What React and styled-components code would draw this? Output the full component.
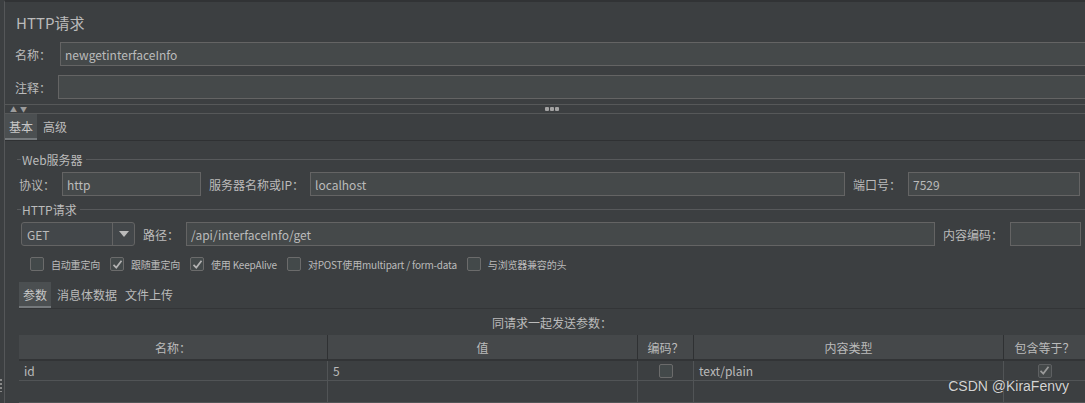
import React from 'react';
import styled, { createGlobalStyle } from 'styled-components';

const GlobalStyle = createGlobalStyle`
  html, body {
    margin: 0;
    padding: 0;
    background: #3c3f41;
    overflow: hidden;
  }
  * {
    box-sizing: border-box;
  }
`;

const App = () => {
  return (
    <>
      <GlobalStyle />
      <Page>
        <Gutter>
          <Grip />
        </Gutter>
        <Frame>
          <Title>HTTP请求</Title>
          <TopRow>
            <TopLabel width={45}>名称：</TopLabel>
            <WideInput>newgetinterfaceInfo</WideInput>
          </TopRow>
          <TopRow gap={9}>
            <TopLabel width={43}>注释：</TopLabel>
            <WideInput />
          </TopRow>
          <Splitter>
            <Arrows>
              <span>▲</span>
              <span>▼</span>
            </Arrows>
            <Dots>
              <i /><i /><i />
            </Dots>
          </Splitter>
          <TabBar>
            <Tab active>基本</Tab>
            <Tab>高级</Tab>
          </TabBar>

          <Content>
            <GroupHeader>
              <span>Web服务器</span>
            </GroupHeader>
            <FormRow>
              <Label width={43}>协议：</Label>
              <Input width={139}>http</Input>
              <Label width={101} space={8}>服务器名称或IP：</Label>
              <Input width={535}>localhost</Input>
              <Label width={55} space={8}>端口号：</Label>
              <Input width={172}>7529</Input>
            </FormRow>

            <GroupHeader>
              <span>HTTP请求</span>
            </GroupHeader>
            <FormRow>
              <Combo>
                <ComboValue>GET</ComboValue>
                <ComboButton>
                  <svg width="10" height="6" viewBox="0 0 10 6">
                    <path d="M0 0 L10 0 L5 6 Z" fill="#bbbbbb" />
                  </svg>
                </ComboButton>
              </Combo>
              <Label width={43} space={8}>路径：</Label>
              <Input width={749}>/api/interfaceInfo/get</Input>
              <Label width={67} space={8}>内容编码：</Label>
              <Input width={71} />
            </FormRow>

            <CheckRow>
              <CheckItem>
                <Box />
                <SmallText>自动重定向</SmallText>
              </CheckItem>
              <CheckItem>
                <Box checked />
                <SmallText>跟随重定向</SmallText>
              </CheckItem>
              <CheckItem>
                <Box checked />
                <SmallText>使用 KeepAlive</SmallText>
              </CheckItem>
              <CheckItem>
                <Box />
                <SmallText>对POST使用multipart / form-data</SmallText>
              </CheckItem>
              <CheckItem>
                <Box />
                <SmallText>与浏览器兼容的头</SmallText>
              </CheckItem>
            </CheckRow>

            <SubTabBar>
              <Tab active>参数</Tab>
              <Tab>消息体数据</Tab>
              <Tab>文件上传</Tab>
            </SubTabBar>

            <Caption>同请求一起发送参数：</Caption>
            <Table>
              <Head>名称：</Head>
              <Head>值</Head>
              <Head>编码？</Head>
              <Head>内容类型</Head>
              <Head last>包含等于？</Head>

              <Cell>id</Cell>
              <Cell>5</Cell>
              <Cell center><Box /></Cell>
              <Cell>text/plain</Cell>
              <Cell center last><Box checked disabled /></Cell>

              <Cell />
              <Cell />
              <Cell />
              <Cell />
              <Cell last />
            </Table>
          </Content>
        </Frame>
        <Watermark>CSDN @KiraFenvy</Watermark>
      </Page>
    </>
  );
};

const Box = ({ checked, disabled }) => (
  <BoxFrame disabled={disabled}>
    {checked && (
      <svg width="11" height="11" viewBox="0 0 11 11">
        <path
          d="M1.5 5.8 L4.3 8.6 L9.5 1.8"
          fill="none"
          stroke={disabled ? '#9a9a9a' : '#b4b4b4'}
          strokeWidth="1.7"
        />
      </svg>
    )}
  </BoxFrame>
);

export default App;

const Page = styled.div`
  position: relative;
  display: flex;
  width: 1085px;
  height: 403px;
  overflow: hidden;
  background: #3c3f41;
  color: #bbbbbb;
  font-family: "Noto Sans CJK SC", "Noto Sans", sans-serif;
  font-size: 12px;
`;

const Gutter = styled.div`
  width: 4px;
  flex-shrink: 0;
  display: flex;
  flex-direction: column;
  justify-content: flex-end;
  padding-bottom: 11px;
`;

const Grip = styled.div`
  width: 2px;
  height: 13px;
  background: repeating-linear-gradient(
    to bottom,
    #8a8a8a 0 2px,
    transparent 2px 4px
  );
`;

const Frame = styled.div`
  flex: 1;
  min-width: 0;
  display: flex;
  flex-direction: column;
  border-left: 1px solid #555759;
  border-top: 2px solid #313335;
`;

const Title = styled.div`
  height: 41px;
  display: flex;
  align-items: center;
  padding: 0 0 0 11px;
  font-size: 15px;
  color: #bbbbbb;
`;

const TopRow = styled.div`
  display: flex;
  align-items: center;
  height: 24px;
  margin-top: ${(p) => p.gap || 0}px;
  padding-left: 10px;
`;

const TopLabel = styled.div`
  width: ${(p) => p.width}px;
  flex-shrink: 0;
  white-space: nowrap;
`;

const WideInput = styled.div`
  flex: 1;
  height: 24px;
  margin-right: -4px;
  display: flex;
  align-items: center;
  padding-left: 4px;
  background: #45494a;
  border: 1px solid #646464;
  white-space: nowrap;
`;

const Splitter = styled.div`
  position: relative;
  height: 10px;
  margin-top: 5px;
  border-top: 1px solid #565859;
  border-bottom: 1px solid #565859;
  display: flex;
  align-items: center;
`;

const Arrows = styled.div`
  display: flex;
  gap: 3px;
  padding-left: 5px;
  font-size: 7px;
  line-height: 8px;
  color: #9c9c9c;
`;

const Dots = styled.div`
  display: flex;
  gap: 1px;
  margin-left: 518px;

  i {
    display: block;
    width: 4px;
    height: 4px;
    border-radius: 1px;
    background: #a3a3a3;
  }
`;

const TabBar = styled.div`
  display: flex;
  height: 27px;
  border-bottom: 1px solid #2f3133;
`;

const Tab = styled.div`
  display: flex;
  align-items: center;
  height: 26px;
  padding: 0 4px 0 4px;
  margin-right: ${(p) => (p.active ? 2 : 0)}px;
  background: ${(p) => (p.active ? '#4b4f51' : 'transparent')};
  border-bottom: 2px solid ${(p) => (p.active ? '#75797c' : 'transparent')};
  color: ${(p) => (p.active ? '#c8c8c8' : '#bbbbbb')};
  white-space: nowrap;
`;

const Content = styled.div`
  display: flex;
  flex-direction: column;
  padding: 5px 0 0 12px;
`;

const GroupHeader = styled.div`
  height: 26px;
  display: flex;
  align-items: center;

  &::before,
  &::after {
    content: '';
    height: 1px;
    background: #57595b;
  }
  &::before {
    width: 4px;
    margin-right: 1px;
  }
  &::after {
    flex: 1;
    margin-left: 3px;
  }
`;

const FormRow = styled.div`
  display: flex;
  align-items: center;
  height: 24px;
  padding-left: 2px;
`;

const Label = styled.div`
  width: ${(p) => p.width}px;
  margin-left: ${(p) => p.space || 0}px;
  flex-shrink: 0;
  white-space: nowrap;
`;

const Input = styled.div`
  width: ${(p) => p.width}px;
  height: 24px;
  flex-shrink: 0;
  display: flex;
  align-items: center;
  padding-left: 4px;
  background: #45494a;
  border: 1px solid #646464;
  white-space: nowrap;
`;

const Combo = styled.div`
  display: flex;
  width: 114px;
  height: 24px;
  margin-left: 2px;
  border: 1px solid #646464;
  border-radius: 3px;
  background: #43474a;
`;

const ComboValue = styled.div`
  flex: 1;
  display: flex;
  align-items: center;
  padding-left: 5px;
  border-right: 1px solid #646464;
`;

const ComboButton = styled.div`
  width: 21px;
  display: flex;
  align-items: center;
  justify-content: center;
`;

const CheckRow = styled.div`
  height: 36px;
  display: flex;
  align-items: center;
  padding-left: 13px;
`;

const CheckItem = styled.div`
  display: flex;
  align-items: center;
  margin-right: 10px;
`;

const BoxFrame = styled.div`
  width: 14px;
  height: 14px;
  flex-shrink: 0;
  display: flex;
  align-items: center;
  justify-content: center;
  border: 1px solid ${(p) => (p.disabled ? '#5e6062' : '#6b6b6b')};
  border-radius: 2px;
  background: ${(p) => (p.disabled ? '#45494a' : '#43494a')};
`;

const SmallText = styled.span`
  margin-left: 7px;
  font-size: 10px;
  letter-spacing: -0.2px;
  white-space: nowrap;
`;

const SubTabBar = styled(TabBar)`
  margin-left: 2px;
  border-bottom-color: #333537;
`;

const Caption = styled.div`
  height: 26px;
  display: flex;
  align-items: center;
  justify-content: center;
  padding-left: 2px;
`;

const Table = styled.div`
  display: grid;
  grid-template-columns: 309px 310px 56px 310px 1fr;
  grid-template-rows: 26px 20px 22px;
  margin-left: 2px;
`;

const Head = styled.div`
  display: flex;
  align-items: center;
  justify-content: center;
  background: #45484a;
  border-bottom: 2px solid #323436;
  border-right: ${(p) => (p.last ? 'none' : '1px solid #2f3133')};
  white-space: nowrap;
`;

const Cell = styled.div`
  display: flex;
  align-items: center;
  justify-content: ${(p) => (p.center ? 'center' : 'flex-start')};
  padding-left: ${(p) => (p.center ? 0 : 5)}px;
  border-bottom: 1px solid #515456;
  border-right: ${(p) => (p.last ? 'none' : '1px solid #515456')};
  white-space: nowrap;
`;

const Watermark = styled.div`
  position: absolute;
  right: 16px;
  bottom: 9px;
  font-family: "Liberation Sans", Arial, sans-serif;
  font-size: 14px;
  color: #d4d4d4;
  text-shadow: 0 0 1px #2a2a2a;
`;
